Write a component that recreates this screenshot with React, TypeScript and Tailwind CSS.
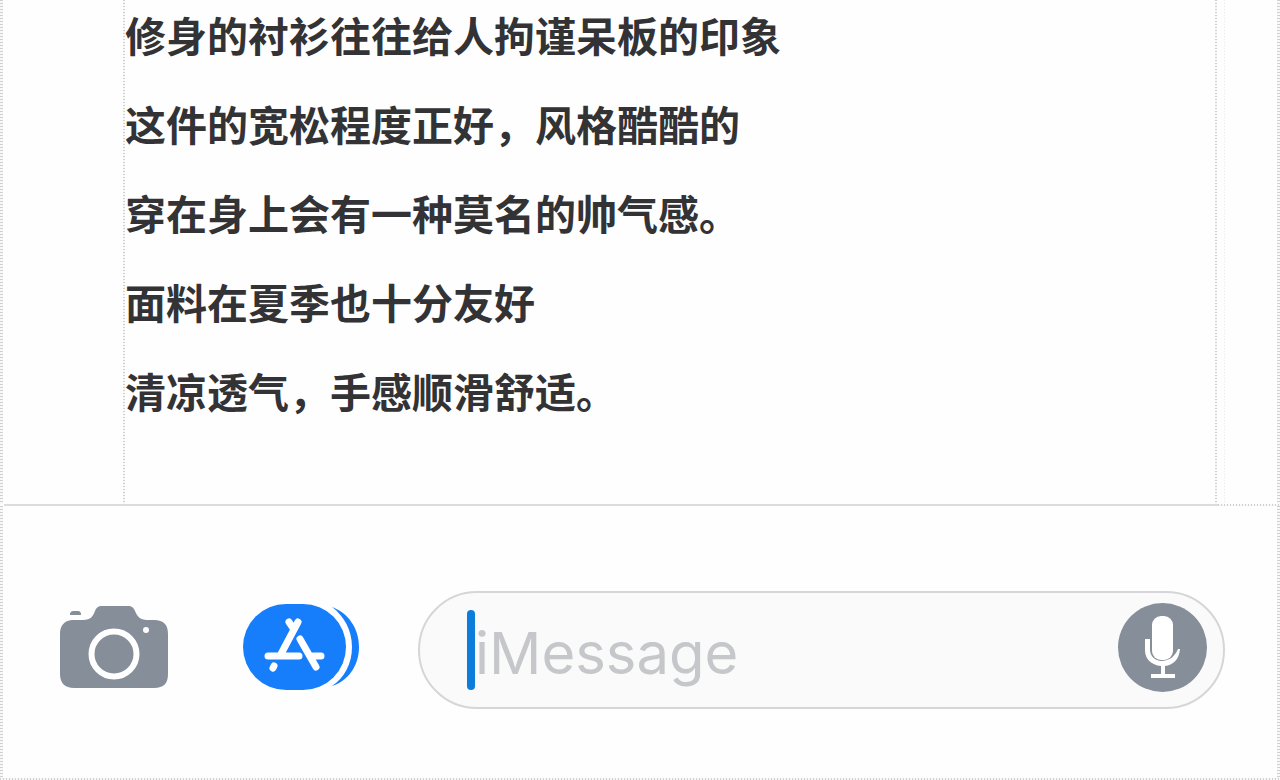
const lines = [
  '修身的衬衫往往给人拘谨呆板的印象',
  '这件的宽松程度正好，风格酷酷的',
  '穿在身上会有一种莫名的帅气感。',
  '面料在夏季也十分友好',
  '清凉透气，手感顺滑舒适。',
];

const VerticalGuide = ({ className = '' }: { className?: string }) =>
  <div className={`shrink-0 bg-[repeating-linear-gradient(#d0d0d0_0px_1px,#f8f8f8_1px_3px)] ${className}`} />

const HorizontalGuide = ({ className = '' }: { className?: string }) =>
  <div className={`shrink-0 bg-[repeating-linear-gradient(90deg,#d0d0d0_0px_1px,#f8f8f8_1px_3px)] ${className}`} />

const CameraIcon = () =>
  <svg className="block" width="110" height="84" viewBox="0 0 110 84" aria-hidden="true">
    <path
      fill="#868e99"
      d="M13 14H23C31 14 33 10 35 5C36.500 1.500 38 0 42 0H68C72 0 73.500 1.500 75 5C77 10 80 14 87 14H94C104 14 108 19 108 28V68C108 77 104 82 94 82H14C5 82 0 77 0 68V28C0 19 5 14 13 14Z"
    />
    <path fill="#868e99" d="M10 9C10 6 11 5 14 5H18C20 5 21 6 21 9Z" />
    <circle cx="54" cy="48" r="22.500" fill="none" stroke="#fff" strokeWidth="6" />
    <circle cx="86" cy="24" r="3" fill="#fff" />
  </svg>

const AppStoreIcon = () =>
  <svg className="block" width="116" height="86" viewBox="0 0 116 86" aria-hidden="true">
    <path fill="#167efb" d="M89 3C105 9 116 24 116 43C116 62 105 77 89 82C101 74 109 60 109 43C109 26 101 12 89 3Z" />
    <rect width="103" height="86" rx="43" fill="#167efb" />
    <g fill="none" stroke="#fff" strokeWidth="7" strokeLinecap="round">
      <path d="M55 18L38 50" />
      <path d="M46 18L50 24" />
      <path d="M57 35L73 63" />
      <path d="M25 52H56" />
      <path d="M70 52H78" />
      <path d="M31 62L30 64" />
    </g>
  </svg>

const MicIcon = () =>
  <svg className="block" width="89" height="89" viewBox="0 0 89 89" aria-hidden="true">
    <circle cx="44.500" cy="44.500" r="44.500" fill="#868e99" />
    <rect x="34" y="13" width="21" height="44" rx="9" fill="#fff" />
    <path
      fill="#fff"
      d="M27 36H32V46C32 53 36 57 43 58C52 58 57 53 60 46H62C61 57 55 62 47 63V71H57V75H33V71H43V63C33 62 27 56 27 47Z"
    />
  </svg>

const Notes = () =>
  <section className="flex">
    <VerticalGuide className="w-[3px]" />
    <div className="w-[120px] shrink-0" />
    <VerticalGuide className="w-[2px]" />
    <div className="grow pb-[65px] text-[41px] leading-[89px] font-bold text-[#333336]">
      <div className="-mt-[6px]">
        {lines.map(line => <p key={line}>{line}</p>)}
      </div>
    </div>
    <VerticalGuide className="w-[2px]" />
    <VerticalGuide className="ml-[7px] w-px opacity-40" />
    <div className="w-[52px] shrink-0" />
    <VerticalGuide className="w-[3px]" />
  </section>

const Composer = () =>
  <form className="flex grow items-stretch" onSubmit={e => e.preventDefault()}>
    <VerticalGuide className="w-[3px]" />
    <div className="flex min-w-0 grow items-start pt-[85px] pr-[52px] pb-[68px] pl-[57px]">
      <button type="button" aria-label="Camera" className="mt-[15px] shrink-0">
        <CameraIcon />
      </button>
      <button type="button" aria-label="Apps" className="mt-[13px] ml-[73px] shrink-0">
        <AppStoreIcon />
      </button>
      <div className="ml-[59px] flex h-[118px] min-w-0 grow items-center rounded-full border-2 border-[#d6d6d8] bg-[#fafafa] pr-4 pl-[47px]">
        <span className="h-20 w-2 shrink-0 rounded-full bg-[#0b7ddb]" />
        <input
          type="text"
          aria-label="Message"
          placeholder="iMessage"
          className="h-20 w-0 min-w-0 grow bg-transparent pt-1.5 font-['Inter',sans-serif] text-[58px] text-[#333336] outline-none placeholder:text-[#c6c7ca]"
        />
        <button type="button" aria-label="Dictate" className="mb-1.5 shrink-0">
          <MicIcon />
        </button>
      </div>
    </div>
    <VerticalGuide className="w-[3px]" />
  </form>

const App = () =>
  <main className="flex min-h-screen flex-col bg-[#fefefe] font-['Liberation_Sans','Noto_Sans_CJK_SC',sans-serif]" lang="zh-CN">
    <Notes />
    <div className="flex">
      <div className="ml-1 h-[2px] grow bg-[#dcdcdc]" />
      <HorizontalGuide className="h-[2px] w-[62px]" />
    </div>
    <Composer />
    <HorizontalGuide className="h-[2px] w-full" />
  </main>

export default App;
